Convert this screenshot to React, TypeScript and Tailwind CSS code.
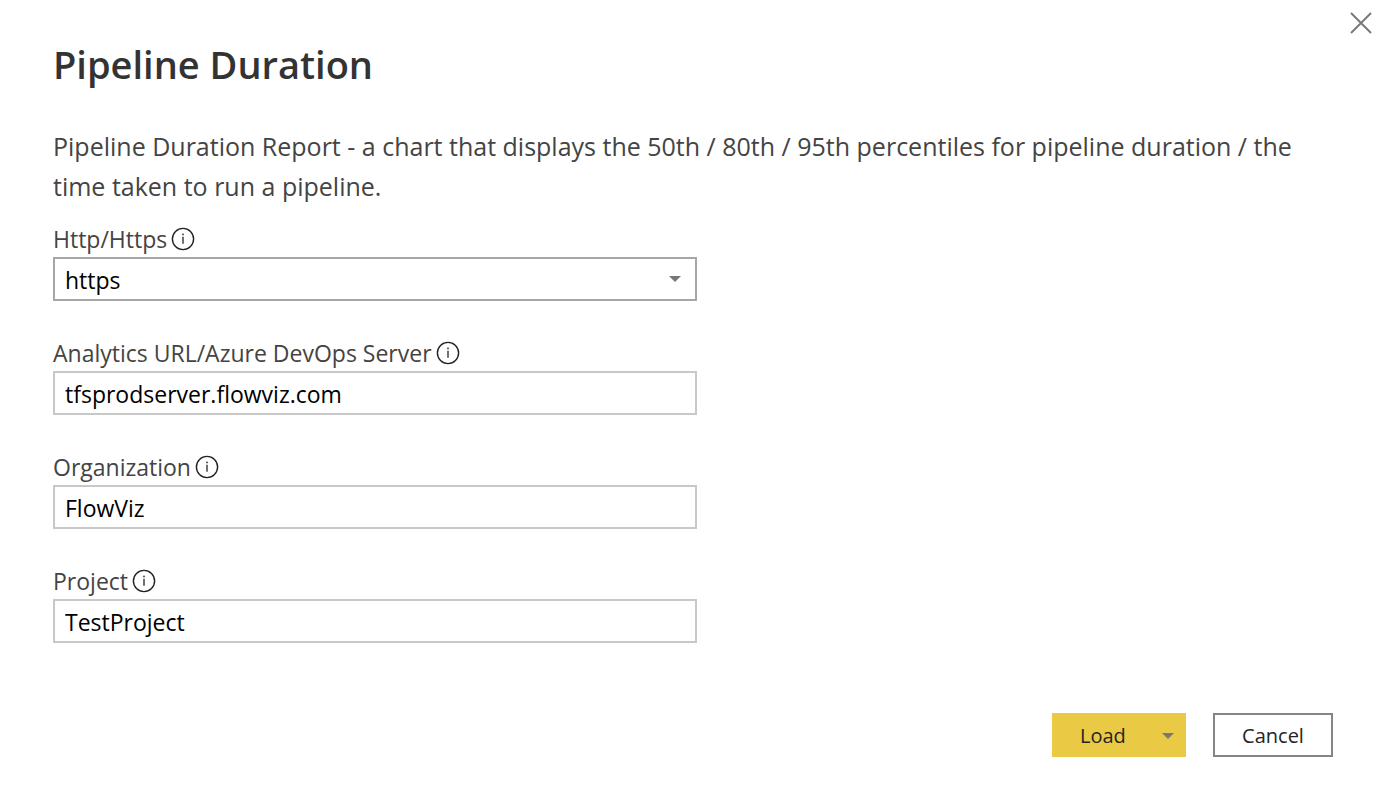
import { useState } from "react";
import type { ReactNode } from "react";

function InfoIcon() {
  return (
    <svg viewBox="0 0 24 24" className="size-6 shrink-0" fill="none" aria-hidden="true">
      <circle cx="12" cy="12" r="10.6" stroke="#222" strokeWidth="1.4" />
      <path d="M12 9.8v7" stroke="#333" strokeWidth="1.4" />
      <circle cx="12" cy="7.4" r="0.9" fill="#333" />
    </svg>
  );
}

function Caret({ className }: { className: string }) {
  return (
    <svg viewBox="0 0 12 6" className={className} aria-hidden="true">
      <path d="M0 0h12L6 6z" fill="currentColor" />
    </svg>
  );
}

function Field({ id, label, children }: { id: string; label: string; children: ReactNode }) {
  return (
    <div className="flex flex-col gap-0.5">
      <div className="flex h-8 items-center gap-1">
        <label htmlFor={id} className="text-[23px] leading-8 text-[#444]">{label}</label>
        <InfoIcon />
      </div>
      {children}
    </div>
  );
}

const control =
  "h-11 w-full appearance-none border-2 bg-white px-2.5 pt-0.5 text-[23px] leading-8 text-black outline-none";

function TextField({ id, label, initial }: { id: string; label: string; initial: string }) {
  const [value, setValue] = useState(initial);
  return (
    <Field id={id} label={label}>
      <input id={id} type="text" value={value} onChange={(e) => setValue(e.target.value)} className={`${control} border-[#c8c8c8]`} />
    </Field>
  );
}

export default function App() {
  const [scheme, setScheme] = useState("https");
  return (
    <main className="relative min-h-screen bg-white pt-9 pr-[55px] pb-9 pl-[53px] font-['Open_Sans',sans-serif]">
      <button type="button" aria-label="Close" className="absolute top-3 right-4 text-[#777]">
        <svg viewBox="0 0 22 22" className="size-[22px]" fill="none" stroke="currentColor" strokeWidth="1.9" aria-hidden="true">
          <path d="M1 1l20 20M21 1L1 21" />
        </svg>
      </button>
      <h1 className="text-[38px] leading-14 font-semibold text-[#333]">Pipeline Duration</h1>
      <p className="mt-[34px] text-[25px] leading-10 text-[#444]">
        Pipeline Duration Report - a chart that displays the 50th / 80th / 95th percentiles for pipeline duration / the time taken to run a pipeline.
      </p>
      <form className="mt-[17px]" onSubmit={(e) => e.preventDefault()}>
        <div className="flex max-w-[644px] flex-col gap-9">
          <Field id="scheme" label="Http/Https">
            <div className="relative">
              <select id="scheme" value={scheme} onChange={(e) => setScheme(e.target.value)} className={`${control} border-[#a6a6a6]`}>
                <option>https</option>
                <option>http</option>
              </select>
              <Caret className="pointer-events-none absolute top-[19px] right-4 h-1.5 w-3 text-[#777]" />
            </div>
          </Field>
          <TextField id="server" label="Analytics URL/Azure DevOps Server" initial="tfsprodserver.flowviz.com" />
          <TextField id="organization" label="Organization" initial="FlowViz" />
          <TextField id="project" label="Project" initial="TestProject" />
        </div>
        <div className="mt-[70px] flex justify-end gap-[27px] text-[20px] leading-8 text-[#252423]">
          <button type="submit" className="flex h-11 w-[134px] items-center justify-between bg-[#eac945] pt-0.5 pr-3 pl-7">
            Load
            <Caret className="h-1.5 w-3 text-[#777]" />
          </button>
          <button type="button" className="h-11 w-[120px] border-2 border-[#858585] bg-white pt-0.5">Cancel</button>
        </div>
      </form>
    </main>
  );
}
